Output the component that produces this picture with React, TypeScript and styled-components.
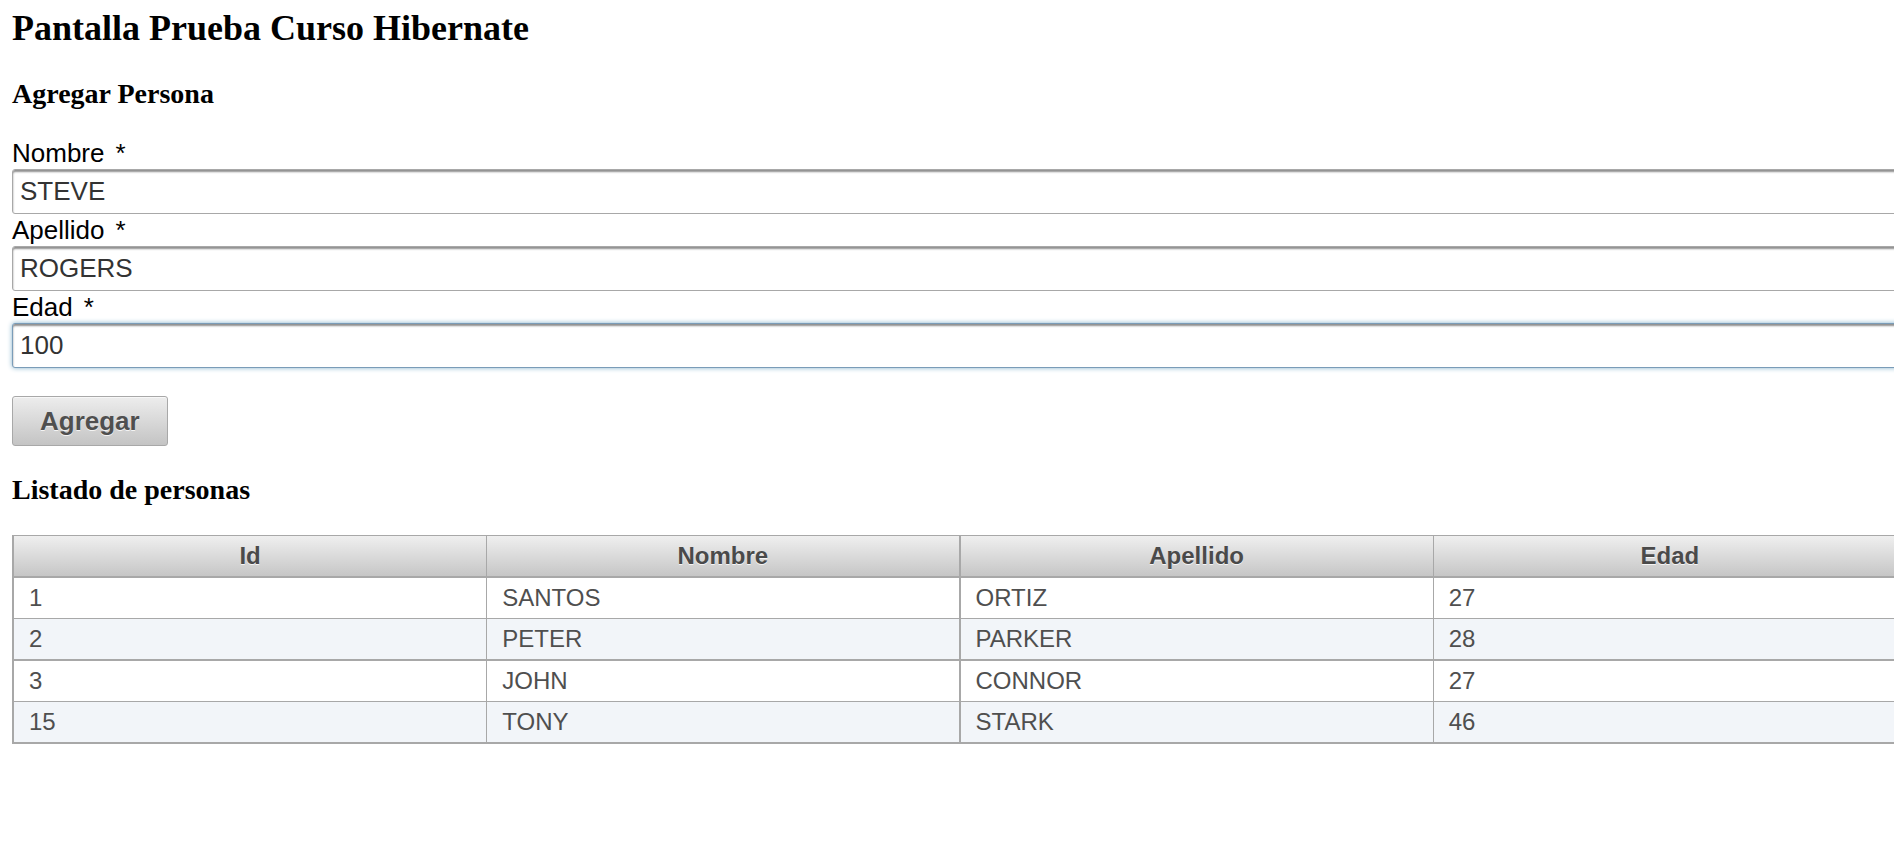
import React from "react";
import styled, { createGlobalStyle } from "styled-components";

const GlobalStyle = createGlobalStyle`
  html, body {
    margin: 0;
    padding: 0;
    background: #ffffff;
    overflow: hidden;
  }
  * { box-sizing: border-box; }
`;

const Page = styled.div`
  padding: 8px 0 0 12px;
  width: 1920px;
`;

const Title = styled.h1`
  margin: 0;
  font-family: "Liberation Serif", "Times New Roman", serif;
  font-weight: bold;
  font-size: 36px;
  line-height: 40px;
  color: #000;
`;

const SectionTitle = styled.h3<{ $top: number; $bottom: number }>`
  margin: ${(p) => p.$top}px 0 ${(p) => p.$bottom}px 0;
  font-family: "Liberation Serif", "Times New Roman", serif;
  font-weight: bold;
  font-size: 28px;
  line-height: 32px;
  color: #000;
`;

const Form = styled.form`
  display: flex;
  flex-direction: column;
  align-items: flex-start;
`;

const Label = styled.label`
  display: block;
  height: 30px;
  margin-bottom: 1px;
  font-family: "Liberation Sans", Arial, sans-serif;
  font-size: 26px;
  line-height: 30px;
  color: #000;
`;

const Required = styled.span`
  margin-left: 11px;
`;

const Input = styled.input<{ $focused?: boolean }>`
  display: block;
  width: 1900px;
  height: 45px;
  margin: 0 0 1px 0;
  padding: 0 8px 0 7px;
  border: 1px solid ${(p) => (p.$focused ? "#7a9cb8" : "#a8a8a8")};
  border-radius: 3px;
  background: #ffffff;
  box-shadow: ${(p) =>
    p.$focused
      ? "0 0 5px #85b2cb, inset 0 2px 2px #8f8f8f"
      : "inset 0 2px 2px #8f8f8f"};
  font-family: "Liberation Sans", Arial, sans-serif;
  font-size: 26px;
  color: #333;
  outline: none;
`;

const Button = styled.button`
  margin-top: 27px;
  height: 50px;
  padding: 0 27px;
  border: 1px solid #a8a8a8;
  border-radius: 3px;
  background: linear-gradient(to bottom, #ededed 0%, #c4c4c4 100%);
  box-shadow: inset 0 1px 0 rgba(255, 255, 255, 0.6);
  font-family: "Liberation Sans", Arial, sans-serif;
  font-weight: bold;
  font-size: 26px;
  color: #4f4f4f;
  text-shadow: 0 1px 0 rgba(255, 255, 255, 0.8);
  cursor: pointer;
`;

const Table = styled.table`
  width: 1895px;
  table-layout: fixed;
  border-collapse: separate;
  border-spacing: 0;
  border-top: 1px solid #a8a8a8;
  border-left: 2px solid #a8a8a8;
  font-family: "Liberation Sans", Arial, sans-serif;
  font-size: 24px;
  color: #4f4f4f;
`;

const HeadCell = styled.th<{ $thick?: boolean }>`
  height: 42px;
  padding: 0 15px;
  border-right: ${(p) => (p.$thick ? 2 : 1)}px solid #a8a8a8;
  border-bottom: 2px solid #a8a8a8;
  background: linear-gradient(to bottom, #efefef 0%, #c6c6c6 100%);
  font-weight: bold;
  line-height: 28px;
  text-align: center;
  vertical-align: middle;
  color: #4a4a4a;
  text-shadow: 0 1px 0 rgba(255, 255, 255, 0.8);
`;

const Row = styled.tr<{ $odd: boolean }>`
  background: ${(p) => (p.$odd ? "#f2f5f9" : "#ffffff")};
`;

const Cell = styled.td<{ $thick?: boolean; $thickBottom?: boolean }>`
  height: ${(p) => (p.$thickBottom ? 42 : 41)}px;
  padding: 0 15px;
  border-right: ${(p) => (p.$thick ? 2 : 1)}px solid #a8a8a8;
  border-bottom: ${(p) => (p.$thickBottom ? 2 : 1)}px solid #a8a8a8;
  line-height: 28px;
  vertical-align: middle;
  text-align: left;
`;

const columns = ["Id", "Nombre", "Apellido", "Edad"];

const people = [
  { id: 1, nombre: "SANTOS", apellido: "ORTIZ", edad: 27 },
  { id: 2, nombre: "PETER", apellido: "PARKER", edad: 28 },
  { id: 3, nombre: "JOHN", apellido: "CONNOR", edad: 27 },
  { id: 15, nombre: "TONY", apellido: "STARK", edad: 46 },
];

export default function App() {
  return (
    <>
      <GlobalStyle />
      <Page>
        <Title>Pantalla Prueba Curso Hibernate</Title>
        <SectionTitle $top={30} $bottom={28}>
          Agregar Persona
        </SectionTitle>
        <Form onSubmit={(e) => e.preventDefault()}>
          <Label htmlFor="nombre">
            Nombre<Required>*</Required>
          </Label>
          <Input id="nombre" defaultValue="STEVE" />
          <Label htmlFor="apellido">
            Apellido<Required>*</Required>
          </Label>
          <Input id="apellido" defaultValue="ROGERS" />
          <Label htmlFor="edad">
            Edad<Required>*</Required>
          </Label>
          <Input id="edad" defaultValue="100" $focused />
          <Button type="submit">Agregar</Button>
        </Form>
        <SectionTitle $top={28} $bottom={29}>
          Listado de personas
        </SectionTitle>
        <Table>
          <thead>
            <tr>
              {columns.map((c, i) => (
                <HeadCell key={c} $thick={i === 1}>
                  {c}
                </HeadCell>
              ))}
            </tr>
          </thead>
          <tbody>
            {people.map((p, r) => {
              const vals = [p.id, p.nombre, p.apellido, p.edad];
              return (
                <Row key={p.id} $odd={r % 2 === 1}>
                  {vals.map((v, i) => (
                    <Cell key={i} $thick={i === 1} $thickBottom={r % 2 === 1}>
                      {v}
                    </Cell>
                  ))}
                </Row>
              );
            })}
          </tbody>
        </Table>
      </Page>
    </>
  );
}
